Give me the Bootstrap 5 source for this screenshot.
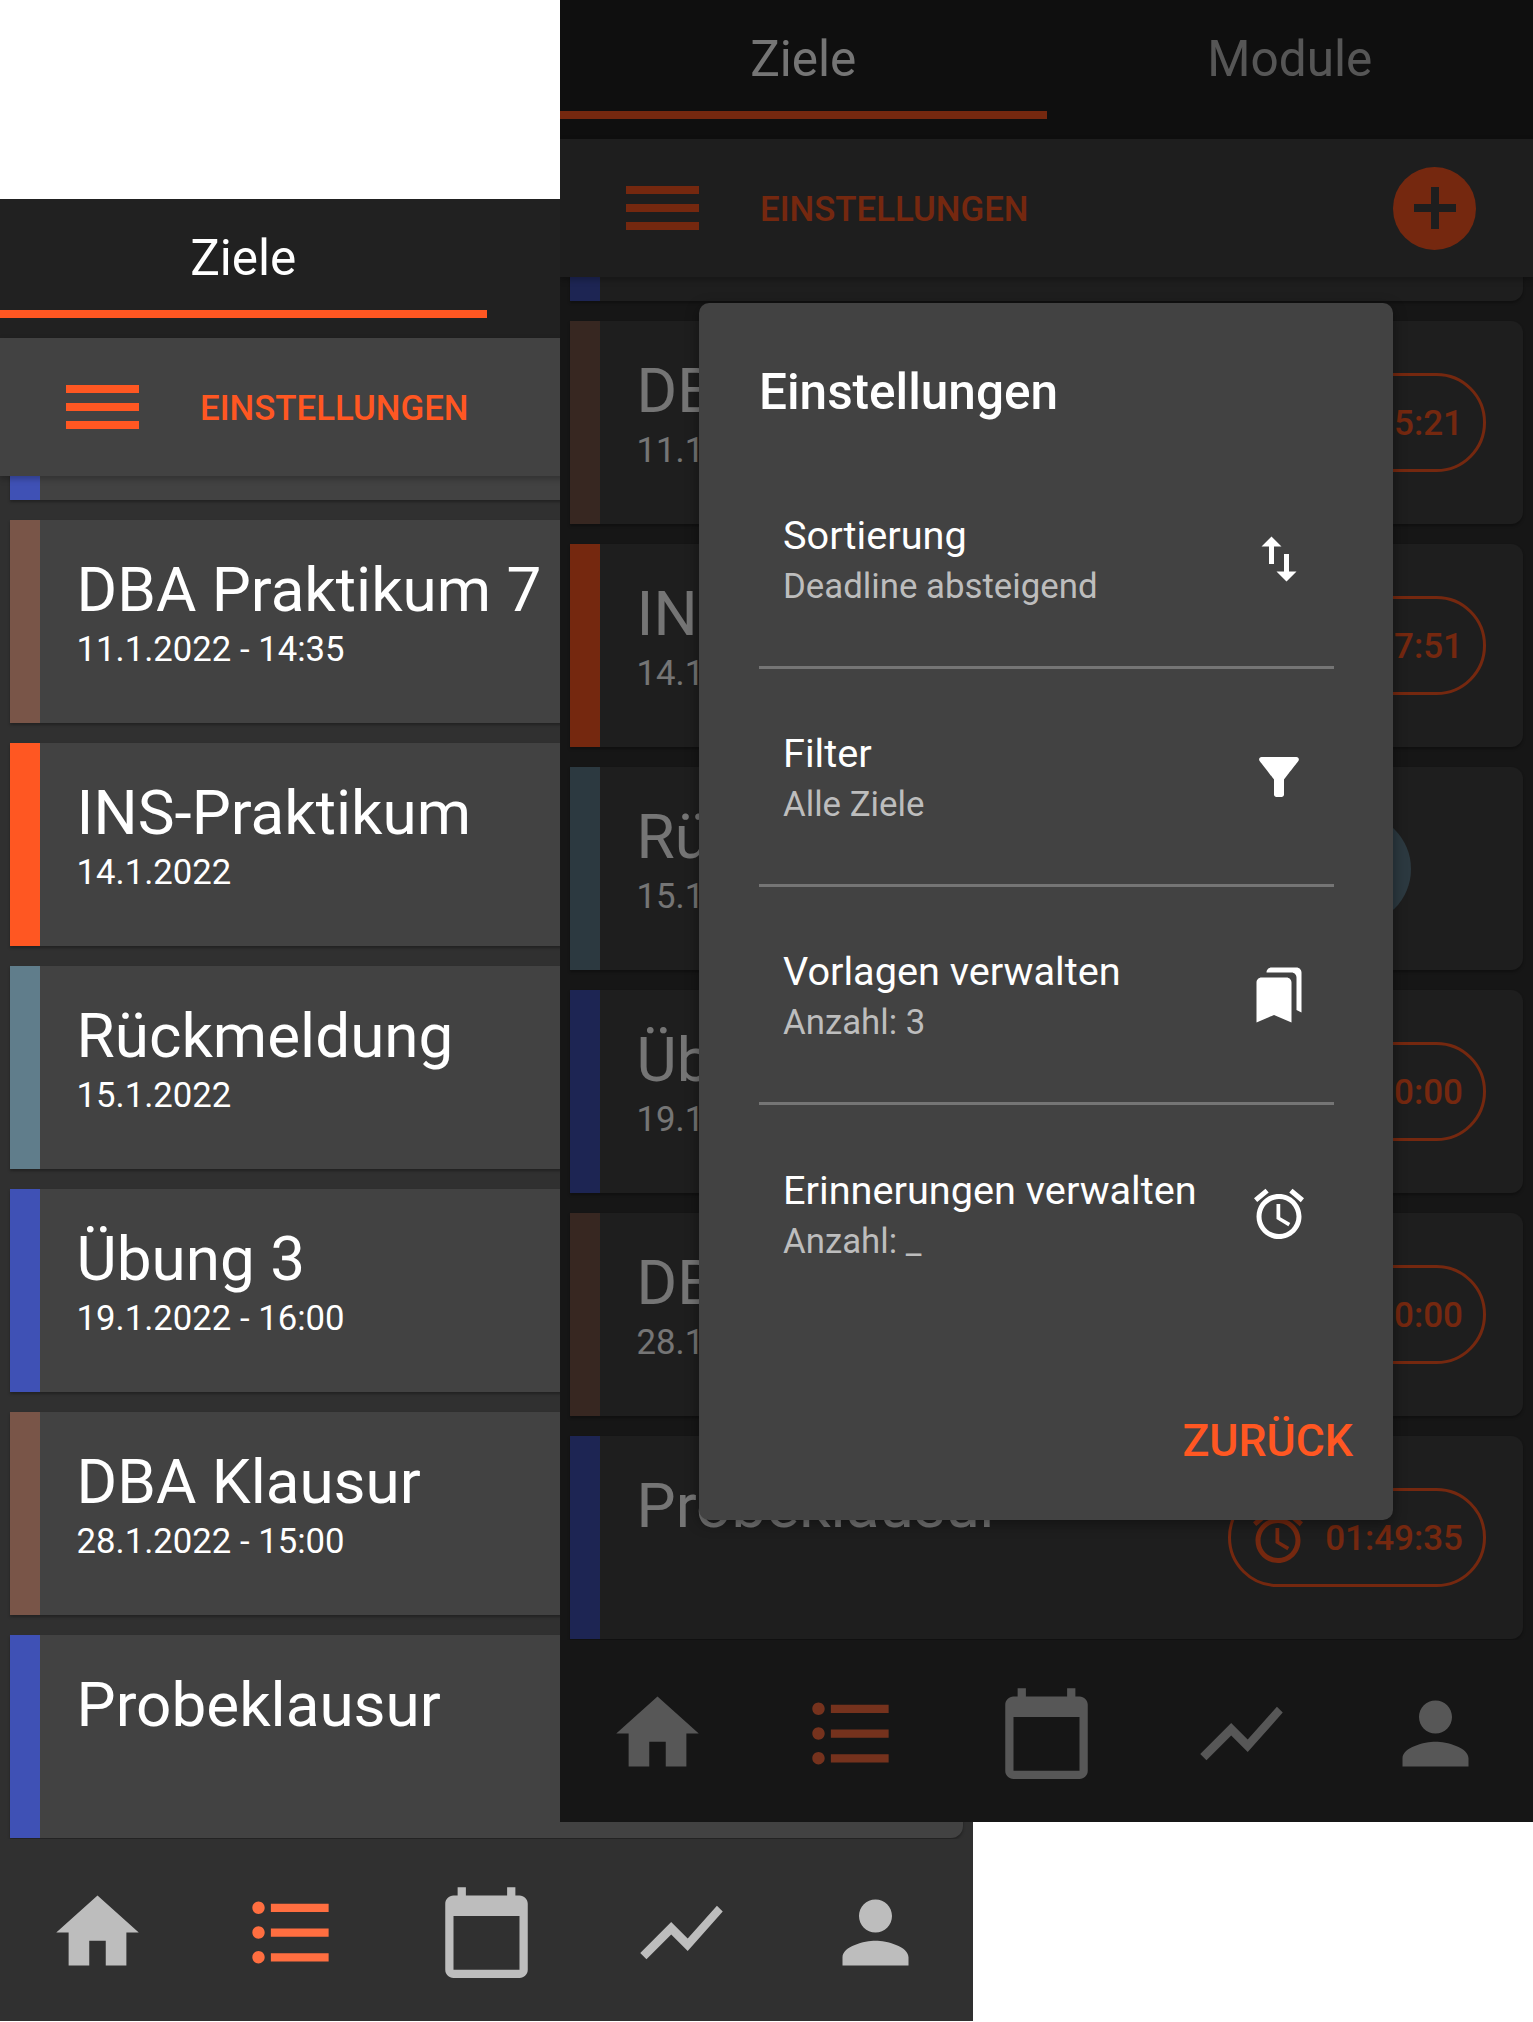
<!DOCTYPE html>
<html lang="de">
<head>
  <meta charset="UTF-8">
  <meta name="viewport" content="width=device-width, initial-scale=1.0">
  <title>Ziele - Einstellungen</title>
  <link href="https://cdn.jsdelivr.net/npm/bootstrap@5.3.0/dist/css/bootstrap.min.css" rel="stylesheet">
  <style>
    body {
      height: 2022px;
      margin: 0;
      background: #fff;
      font-family: Roboto, "Liberation Sans", sans-serif;
      overflow: hidden;
      position: relative;
    }

    /* the two phone screens lie on a free canvas and overlap */
    .phone {
      position: absolute;
      width: 973px;
      height: 1822px;
      background: #303030;
      color: #fff;
      overflow: hidden;
    }
    .phone-back { left: 0; top: 199px; z-index: 1; }
    .phone-front { left: 560px; top: 0; z-index: 2; }

    .tab-bar { height: 139px; background: #212121; }
    .tab-item {
      width: 50%;
      height: 119px;
      font-size: 49.5px;
      line-height: 118px;
      text-align: center;
    }
    .tab-active { border-bottom: 8px solid #ff5722; }
    .tab-muted { color: rgba(255, 255, 255, .7); }

    .tool-bar {
      height: 138px;
      padding: 0 66px 0 66px;
      background: #424242;
      position: relative;
      z-index: 2;
      box-shadow: 0 3px 6px rgba(0, 0, 0, .25);
    }
    .burger { width: 73px; }
    .burger span { display: block; height: 8px; background: #ff5722; margin-bottom: 10px; }
    .burger span:last-child { margin-bottom: 0; }
    .tool-label {
      margin-left: 61px;
      padding-top: 2px;
      font-size: 34.8px;
      font-weight: 500;
      color: #ff5722;
    }
    .fab {
      width: 83px;
      height: 83px;
      margin-left: auto;
      margin-right: -9px;
      border-radius: 50%;
      background: #ff5722;
    }
    .fab svg { width: 42px; height: 42px; fill: #424242; }

    .goal-list { height: 1363px; padding: 0 10px; overflow: hidden; }
    .goal-item {
      height: 203px;
      margin-bottom: 20px;
      background: #424242;
      border-radius: 0 12px 12px 0;
      box-shadow: 0 2px 3px rgba(0, 0, 0, .3);
    }
    .goal-scrolled { margin-top: -179px; }
    .goal-stripe { width: 30px; flex: none; }
    .goal-text { padding: 34px 0 0 36.6px; }
    .goal-title { font-size: 62px; line-height: 72px; white-space: nowrap; }
    .goal-date { font-size: 34.7px; line-height: 42px; margin-top: 2px; white-space: nowrap; }

    .stripe-brown { background: #795548; }
    .stripe-orange { background: #ff5722; }
    .stripe-grey { background: #607d8b; }
    .stripe-indigo { background: #3f51b5; }

    .timer-pill {
      width: 258px;
      height: 99px;
      margin-left: auto;
      margin-right: 37px;
      padding: 0 20px 0 17px;
      border: 3px solid #ff5722;
      border-radius: 50px;
      color: #ff5722;
      font-size: 35px;
      font-weight: 500;
    }
    .timer-pill span { padding-top: 3px; }
    .timer-pill svg { width: 60px; height: 60px; fill: #ff5722; flex: none; }
    .timer-round {
      width: 112px;
      height: 112px;
      margin-left: auto;
      margin-right: 112px;
      border-radius: 50%;
      background: #607d8b;
    }

    .nav-bottom { height: 182px; padding-top: 44px; }
    .nav-slot { width: 20%; text-align: center; }
    .nav-slot svg { width: 99px; height: 99px; fill: #bdbdbd; }
    .nav-slot.is-active svg { fill: #ff6e40; }

    .scrim {
      position: absolute;
      inset: 0;
      background: rgba(0, 0, 0, .54);
      z-index: 5;
    }

    .settings-dialog {
      position: absolute;
      left: 139px;
      top: 303px;
      width: 694px;
      height: 1217px;
      padding: 0 59px 0 60px;
      background: #424242;
      border-radius: 10px;
      z-index: 6;
      box-shadow: 0 4px 14px rgba(0, 0, 0, .4);
    }
    .dialog-title {
      height: 148px;
      padding-top: 62px;
      font-size: 49.5px;
      line-height: 54px;
      font-weight: 500;
    }
    .setting-row {
      height: 218px;
      padding: 0 25px 0 24px;
      border-bottom: 3px solid #757575;
    }
    .setting-row:last-of-type { border-bottom: 0; }
    .setting-copy { padding-top: 4px; }
    .setting-name { font-size: 39.7px; line-height: 50px; }
    .setting-value { font-size: 34.8px; line-height: 50px; color: #bdbdbd; }
    .setting-row svg { width: 60px; height: 60px; fill: #fff; flex: none; }
    .dialog-back {
      position: absolute;
      right: 40px;
      bottom: 52px;
      padding: 0;
      border: 0;
      background: none;
      font-size: 44.6px;
      line-height: 54px;
      font-weight: 500;
      color: #ff5722;
    }
  </style>
</head>
<body>
  <!-- shared material icons -->
  <svg width="0" height="0" class="d-none" aria-hidden="true">
    <symbol id="i-home" viewBox="0 0 24 24"><path d="M10 20v-6h4v6h5v-8h3L12 3 2 12h3v8z"/></symbol>
    <symbol id="i-list" viewBox="0 0 24 24"><path d="M4 10.5c-.83 0-1.5.67-1.5 1.5s.67 1.5 1.5 1.5 1.5-.67 1.5-1.5-.67-1.5-1.5-1.5zm0-6c-.83 0-1.5.67-1.5 1.5S3.17 7.5 4 7.5 5.5 6.83 5.5 6 4.83 4.5 4 4.5zm0 12c-.83 0-1.5.68-1.5 1.5s.68 1.5 1.5 1.5 1.5-.68 1.5-1.5-.67-1.5-1.5-1.5zM7 19h14v-2H7v2zm0-6h14v-2H7v2zm0-8v2h14V5H7z"/></symbol>
    <symbol id="i-calendar" viewBox="0 0 24 24"><path d="M20 3h-1V1h-2v2H7V1H5v2H4c-1.1 0-2 .9-2 2v16c0 1.1.9 2 2 2h16c1.1 0 2-.9 2-2V5c0-1.1-.9-2-2-2zm0 18H4V8h16v13z"/></symbol>
    <symbol id="i-chart" viewBox="0 0 24 24"><path d="M3.5 18.49l6-6.01 4 4L22 6.92l-1.41-1.41-7.09 7.97-4-4L2 16.99z"/></symbol>
    <symbol id="i-person" viewBox="0 0 24 24"><path d="M12 12c2.21 0 4-1.79 4-4s-1.79-4-4-4-4 1.79-4 4 1.79 4 4 4zm0 2c-2.67 0-8 1.34-8 4v2h16v-2c0-2.66-5.33-4-8-4z"/></symbol>
    <symbol id="i-alarm" viewBox="0 0 24 24"><path d="M22 5.72l-4.6-3.86-1.29 1.53 4.6 3.86L22 5.72zM7.88 3.39L6.6 1.86 2 5.71l1.29 1.53 4.59-3.85zM12.5 8H11v6l4.75 2.85.75-1.23-4-2.37V8zM12 4c-4.97 0-9 4.03-9 9s4.03 9 9 9 9-4.03 9-9-4.03-9-9-9zm0 16c-3.87 0-7-3.13-7-7s3.13-7 7-7 7 3.13 7 7-3.13 7-7 7z"/></symbol>
    <symbol id="i-swap" viewBox="0 0 24 24"><path d="M16 17.01V10h-2v7.01h-3L15 21l4-3.99h-3zM9 3L5 6.99h3V14h2V6.99h3L9 3z"/></symbol>
    <symbol id="i-filter" viewBox="0 0 24 24"><path d="M4.25 5.61C6.27 8.2 10 13 10 13v6c0 .55.45 1 1 1h2c.55 0 1-.45 1-1v-6s3.72-4.8 5.74-7.39c.51-.66.04-1.61-.79-1.61H5.04c-.83 0-1.3.95-.79 1.61z"/></symbol>
    <symbol id="i-bookmarks" viewBox="0 0 24 24"><path d="M19 18l2 1V3c0-1.1-.9-2-2-2H8.99C7.89 1 7 1.9 7 3h10c1.1 0 2 .9 2 2v13zM15 5H5c-1.1 0-2 .9-2 2v16l7-3 7 3V7c0-1.1-.9-2-2-2z"/></symbol>
    <symbol id="i-plus" viewBox="0 0 42 42"><path d="M17 0h8v17h17v8H25v17h-8V25H0v-8h17z"/></symbol>
  </svg>

  <!-- Back screen -->
  <div class="phone phone-back">
    <div class="tab-bar d-flex">
      <div class="tab-item tab-active">Ziele</div>
    </div>
    <div class="tool-bar d-flex align-items-center">
      <div class="burger"><span></span><span></span><span></span></div>
      <div class="tool-label">EINSTELLUNGEN</div>
    </div>
    <div class="goal-list">
      <div class="goal-item goal-scrolled d-flex"><div class="goal-stripe stripe-indigo"></div></div>
      <div class="goal-item d-flex">
        <div class="goal-stripe stripe-brown"></div>
        <div class="goal-text"><div class="goal-title">DBA Praktikum 7</div><div class="goal-date">11.1.2022 - 14:35</div></div>
      </div>
      <div class="goal-item d-flex">
        <div class="goal-stripe stripe-orange"></div>
        <div class="goal-text"><div class="goal-title">INS-Praktikum</div><div class="goal-date">14.1.2022</div></div>
      </div>
      <div class="goal-item d-flex">
        <div class="goal-stripe stripe-grey"></div>
        <div class="goal-text"><div class="goal-title">Rückmeldung</div><div class="goal-date">15.1.2022</div></div>
      </div>
      <div class="goal-item d-flex">
        <div class="goal-stripe stripe-indigo"></div>
        <div class="goal-text"><div class="goal-title">Übung 3</div><div class="goal-date">19.1.2022 - 16:00</div></div>
      </div>
      <div class="goal-item d-flex">
        <div class="goal-stripe stripe-brown"></div>
        <div class="goal-text"><div class="goal-title">DBA Klausur</div><div class="goal-date">28.1.2022 - 15:00</div></div>
      </div>
      <div class="goal-item d-flex">
        <div class="goal-stripe stripe-indigo"></div>
        <div class="goal-text"><div class="goal-title">Probeklausur</div></div>
      </div>
    </div>
    <div class="nav-bottom d-flex">
      <div class="nav-slot"><svg><use href="#i-home"/></svg></div>
      <div class="nav-slot is-active"><svg><use href="#i-list"/></svg></div>
      <div class="nav-slot"><svg><use href="#i-calendar"/></svg></div>
      <div class="nav-slot"><svg><use href="#i-chart"/></svg></div>
      <div class="nav-slot"><svg><use href="#i-person"/></svg></div>
    </div>
  </div>

  <!-- Front screen with the settings dialog open -->
  <div class="phone phone-front">
    <div class="tab-bar d-flex">
      <div class="tab-item tab-active">Ziele</div>
      <div class="tab-item tab-muted">Module</div>
    </div>
    <div class="tool-bar d-flex align-items-center">
      <div class="burger"><span></span><span></span><span></span></div>
      <div class="tool-label">EINSTELLUNGEN</div>
      <div class="fab d-flex align-items-center justify-content-center"><svg><use href="#i-plus"/></svg></div>
    </div>
    <div class="goal-list">
      <div class="goal-item goal-scrolled d-flex"><div class="goal-stripe stripe-indigo"></div></div>
      <div class="goal-item d-flex align-items-center">
        <div class="goal-stripe stripe-brown align-self-stretch"></div>
        <div class="goal-text align-self-start"><div class="goal-title">DBA Praktikum 7</div><div class="goal-date">11.1.2022 - 14:35</div></div>
        <div class="timer-pill d-flex align-items-center justify-content-between"><svg><use href="#i-alarm"/></svg><span>5:21</span></div>
      </div>
      <div class="goal-item d-flex align-items-center">
        <div class="goal-stripe stripe-orange align-self-stretch"></div>
        <div class="goal-text align-self-start"><div class="goal-title">INS-Praktikum</div><div class="goal-date">14.1.2022</div></div>
        <div class="timer-pill d-flex align-items-center justify-content-between"><svg><use href="#i-alarm"/></svg><span>07:51</span></div>
      </div>
      <div class="goal-item d-flex align-items-center">
        <div class="goal-stripe stripe-grey align-self-stretch"></div>
        <div class="goal-text align-self-start"><div class="goal-title">Rückmeldung</div><div class="goal-date">15.1.2022</div></div>
        <div class="timer-round"></div>
      </div>
      <div class="goal-item d-flex align-items-center">
        <div class="goal-stripe stripe-indigo align-self-stretch"></div>
        <div class="goal-text align-self-start"><div class="goal-title">Übung 3</div><div class="goal-date">19.1.2022 - 16:00</div></div>
        <div class="timer-pill d-flex align-items-center justify-content-between"><svg><use href="#i-alarm"/></svg><span>0:00</span></div>
      </div>
      <div class="goal-item d-flex align-items-center">
        <div class="goal-stripe stripe-brown align-self-stretch"></div>
        <div class="goal-text align-self-start"><div class="goal-title">DBA Klausur</div><div class="goal-date">28.1.2022 - 15:00</div></div>
        <div class="timer-pill d-flex align-items-center justify-content-between"><svg><use href="#i-alarm"/></svg><span>0:00</span></div>
      </div>
      <div class="goal-item d-flex align-items-center">
        <div class="goal-stripe stripe-indigo align-self-stretch"></div>
        <div class="goal-text align-self-start"><div class="goal-title">Probeklausur</div></div>
        <div class="timer-pill d-flex align-items-center justify-content-between"><svg><use href="#i-alarm"/></svg><span>01:49:35</span></div>
      </div>
    </div>
    <div class="nav-bottom d-flex">
      <div class="nav-slot"><svg><use href="#i-home"/></svg></div>
      <div class="nav-slot is-active"><svg><use href="#i-list"/></svg></div>
      <div class="nav-slot"><svg><use href="#i-calendar"/></svg></div>
      <div class="nav-slot"><svg><use href="#i-chart"/></svg></div>
      <div class="nav-slot"><svg><use href="#i-person"/></svg></div>
    </div>

    <div class="scrim"></div>

    <div class="settings-dialog">
      <div class="dialog-title">Einstellungen</div>
      <div class="setting-row d-flex align-items-center justify-content-between">
        <div class="setting-copy"><div class="setting-name">Sortierung</div><div class="setting-value">Deadline absteigend</div></div>
        <svg><use href="#i-swap"/></svg>
      </div>
      <div class="setting-row d-flex align-items-center justify-content-between">
        <div class="setting-copy"><div class="setting-name">Filter</div><div class="setting-value">Alle Ziele</div></div>
        <svg><use href="#i-filter"/></svg>
      </div>
      <div class="setting-row d-flex align-items-center justify-content-between">
        <div class="setting-copy"><div class="setting-name">Vorlagen verwalten</div><div class="setting-value">Anzahl: 3</div></div>
        <svg><use href="#i-bookmarks"/></svg>
      </div>
      <div class="setting-row d-flex align-items-center justify-content-between">
        <div class="setting-copy"><div class="setting-name">Erinnerungen verwalten</div><div class="setting-value">Anzahl: _</div></div>
        <svg><use href="#i-alarm"/></svg>
      </div>
      <button class="dialog-back" type="button">ZURÜCK</button>
    </div>
  </div>
</body>
</html>
